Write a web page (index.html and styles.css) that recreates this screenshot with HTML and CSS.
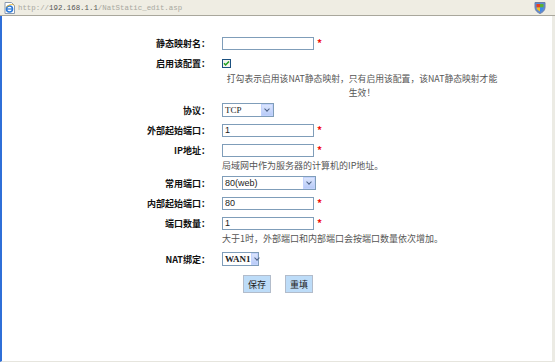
FILE: index.html
```
<!DOCTYPE html>
<html lang="zh-CN">
<head>
    <meta charset="UTF-8">
    <title>NatStatic_edit</title>
    <link rel="stylesheet" href="styles.css">
</head>
<body>
    <div class="window">
        <!-- Address bar -->
        <div class="addressbar">
            <svg class="page-icon" width="11" height="12" viewBox="0 0 11 12">
                <path d="M1 0.5h6.5l3 3v8h-9.5z" fill="#fff" stroke="#8a9ab0"/>
                <circle cx="5.5" cy="7" r="3" fill="none" stroke="#2a78d8" stroke-width="1.6"/>
                <path d="M3 7h5" stroke="#2a78d8" stroke-width="1.2"/>
                <path d="M2 5.5c2-3 7-4 8-2" fill="none" stroke="#e8b020" stroke-width="0.9"/>
            </svg>
            <span class="url">http://<b>192.168.1.1</b>/NatStatic_edit.asp</span>
            <svg class="shield" width="12" height="13" viewBox="0 0 12 13">
                <path d="M1 1.5h10v5c0 3-2.5 5-5 6c-2.5-1-5-3-5-6z" fill="#5a8ad8" stroke="#6a7fa8"/>
                <path d="M2.5 3h3.5v3.5h-3.5z" fill="#e84020"/>
                <path d="M6 3h3.5v3.5h-3.5z" fill="#5cb030"/>
                <path d="M2.5 6.5h3.5v4c-1.5-.8-3.5-2-3.5-4z" fill="#f0c020"/>
                <path d="M6 6.5h3.5c0 2-2 3.2-3.5 4z" fill="#3a8ae8"/>
            </svg>
        </div>

        <!-- Form -->
        <div class="content">
            <div class="form">
                <div class="row">
                    <label>静态映射名：</label>
                    <div class="field"><input type="text" class="text"><span class="req">*</span></div>
                </div>
                <div class="row">
                    <label>启用该配置：</label>
                    <div class="field">
                        <span class="check">
                            <svg width="9" height="9" viewBox="0 0 9 9">
                                <rect x="0.5" y="0.5" width="8" height="8" fill="#f4f4ee" stroke="#1c5180"/>
                                <path d="M2 4.2l1.6 1.8l3.4-3.6" fill="none" stroke="#21a121" stroke-width="1.5"/>
                            </svg>
                        </span>
                    </div>
                </div>
                <div class="row hint hint-first">
                    <span></span>
                    <p class="center">打勾表示启用该NAT静态映射，只有启用该配置，该NAT静态映射才能<br>生效！</p>
                </div>
                <div class="row">
                    <label>协议：</label>
                    <div class="field">
                        <div class="select w-proto serif"><span>TCP</span><i class="arrow"></i></div>
                    </div>
                </div>
                <div class="row">
                    <label>外部起始端口：</label>
                    <div class="field"><input type="text" class="text" value="1"><span class="req">*</span></div>
                </div>
                <div class="row">
                    <label>IP地址：</label>
                    <div class="field"><input type="text" class="text"><span class="req">*</span></div>
                </div>
                <div class="row hint hint-ip">
                    <span></span>
                    <p>局域网中作为服务器的计算机的IP地址。</p>
                </div>
                <div class="row">
                    <label>常用端口：</label>
                    <div class="field">
                        <div class="select w-port"><span>80(web)</span><i class="arrow"></i></div>
                    </div>
                </div>
                <div class="row">
                    <label>内部起始端口：</label>
                    <div class="field"><input type="text" class="text" value="80"><span class="req">*</span></div>
                </div>
                <div class="row">
                    <label>端口数量：</label>
                    <div class="field"><input type="text" class="text" value="1"><span class="req">*</span></div>
                </div>
                <div class="row hint hint-count">
                    <span></span>
                    <p>大于1时，外部端口和内部端口会按端口数量依次增加。</p>
                </div>
                <div class="row">
                    <label>NAT绑定：</label>
                    <div class="field">
                        <div class="select w-wan serif bold"><span>WAN1</span><i class="arrow"></i></div>
                    </div>
                </div>
                <div class="buttons">
                    <button type="button">保存</button>
                    <button type="button">重填</button>
                </div>
            </div>
        </div>
    </div>
</body>
</html>
```

FILE: styles.css
```
/* Page frame */
body {
    margin: 0;
    font-family: "Noto Sans CJK SC", "Liberation Sans", sans-serif;
    font-size: 9px;
    color: #222;
    background: #fff;
}

.window {
    width: 555px;
    height: 362px;
    box-sizing: border-box;
    display: flex;
    flex-direction: column;
}

/* Address bar */
.addressbar {
    height: 15px;
    display: flex;
    align-items: center;
    padding: 0 4px;
    background: #efede3;
    border-bottom: 1px solid #a9a79c;
}

.page-icon {
    margin-right: 3px;
}

.url {
    flex: 1;
    font-family: "Liberation Mono", monospace;
    font-size: 7.4px;
    color: #a8a8a0;
    white-space: nowrap;
}

.url b {
    font-weight: normal;
    color: #555;
}

.shield {
    margin-right: 5px;
}

/* Content area */
.content {
    flex: 1;
    border-left: 2px solid #2f6fd8;
    border-right: 3px solid #ecebe4;
    border-bottom: 1px solid #e6e5de;
    padding-top: 17px;
}

.form {
    display: flex;
    flex-direction: column;
}

.row {
    display: grid;
    grid-template-columns: 208px 1fr;
    column-gap: 12px;
    height: 20px;
    align-items: center;
}

.row label {
    text-align: right;
    font-weight: bold;
    color: #111;
}

.field {
    display: flex;
    align-items: center;
}

/* Inputs */
.text {
    width: 92px;
    height: 13px;
    box-sizing: border-box;
    border: 1px solid #7f9db9;
    padding: 0 2px;
    font-family: "Liberation Sans", sans-serif;
    font-size: 9px;
    color: #222;
    outline: none;
}

.req {
    color: #f01010;
    font-weight: bold;
    font-size: 10px;
    margin-left: 3px;
    line-height: 1;
}

.check {
    display: flex;
}

/* Selects */
.select {
    height: 14px;
    box-sizing: border-box;
    border: 1px solid #7f9db9;
    display: flex;
    align-items: center;
    justify-content: space-between;
    padding-left: 2px;
    font-family: "Liberation Sans", sans-serif;
    font-size: 9px;
    background: #fff;
}

.select.serif {
    font-family: "Liberation Serif", serif;
}

.select.bold {
    font-weight: bold;
}

.w-proto { width: 52px; }
.w-port { width: 94px; }
.w-wan { width: 37px; }

.arrow {
    width: 12px;
    height: 12px;
    box-sizing: border-box;
    background: linear-gradient(#dbe5fd, #b8cbf8);
    border: 1px solid #c3d3fd;
    position: relative;
}

.arrow::after {
    content: "";
    position: absolute;
    left: 3px;
    top: 2px;
    width: 3px;
    height: 3px;
    border-right: 1.5px solid #4d6185;
    border-bottom: 1.5px solid #4d6185;
    transform: rotate(45deg);
}

/* Hint rows */
.hint {
    height: auto;
    line-height: 14px;
    color: #555;
}

.hint p {
    margin: 0;
    white-space: nowrap;
}

.hint .center {
    width: 280px;
    text-align: center;
    font-size: 8.8px;
}

.hint-first {
    margin-top: -1px;
}

.hint-ip {
    margin-top: -1px;
}

.hint-count {
    margin-top: -1px;
    margin-bottom: 3px;
}

/* Buttons */
.buttons {
    display: flex;
    gap: 14px;
    padding-left: 241px;
    margin-top: 6px;
}

.buttons button {
    width: 28px;
    height: 18px;
    padding: 0;
    border: 1px solid #b2bccb;
    background: #bddcf8;
    font-family: "Noto Sans CJK SC", sans-serif;
    font-size: 9px;
    color: #222;
}
```
